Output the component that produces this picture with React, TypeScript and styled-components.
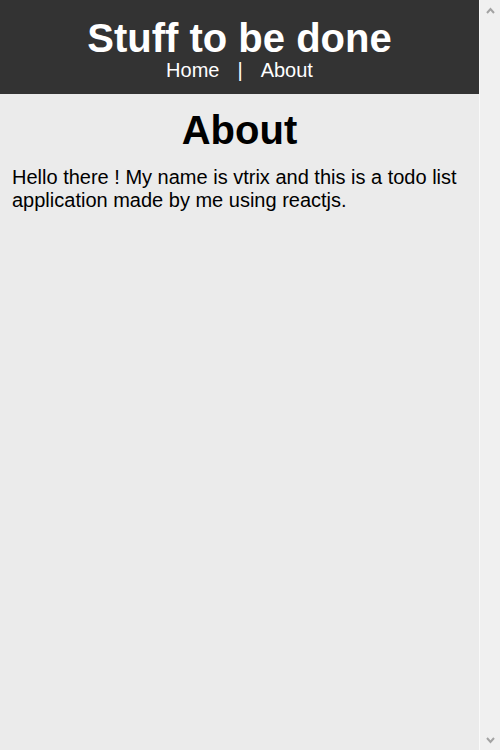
import React from "react";
import styled, { createGlobalStyle } from "styled-components";

const GlobalStyle = createGlobalStyle`
  html, body {
    margin: 0;
    padding: 0;
    background: #ebebeb;
    font-family: "Liberation Sans", Arial, sans-serif;
  }
`;

const Frame = styled.div`
  display: flex;
  height: 100vh;
  overflow: hidden;
`;

const Page = styled.div`
  flex: 1;
  min-width: 0;
  display: flex;
  flex-direction: column;
`;

const ScrollBar = styled.div`
  width: 20px;
  flex: none;
  background: #f0f0f0;
  border-left: 1px solid #fafafa;
  display: flex;
  flex-direction: column;
  justify-content: space-between;
  align-items: center;
  padding: 7px 0 6px;
`;

const Arrow = styled.svg`
  display: block;
  width: 9px;
  height: 7px;
`;

const Header = styled.header`
  background: #333333;
  color: #ffffff;
  padding: 18px 0 12px;
  display: flex;
  flex-direction: column;
  align-items: center;
`;

const Title = styled.h1`
  margin: 0;
  font-size: 40px;
  line-height: 40px;
  font-weight: bold;
`;

const Nav = styled.nav`
  display: flex;
  align-items: center;
  gap: 18px;
  margin-top: 1px;
  font-size: 20px;
  line-height: 23px;
`;

const NavLink = styled.a`
  color: #ffffff;
  text-decoration: none;
`;

const Main = styled.main`
  flex: 1;
  padding: 14px 12px;
  color: #000000;
`;

const Heading = styled.h1`
  margin: 0 0 13px;
  text-align: center;
  font-size: 40px;
  font-weight: bold;
`;

const Para = styled.p`
  margin: 0;
  font-size: 20px;
  line-height: 23px;
`;

export default function App() {
  return (
    <>
      <GlobalStyle />
      <Frame>
        <Page>
          <Header>
            <Title>Stuff to be done</Title>
            <Nav>
              <NavLink href="#">Home</NavLink>
              <span>|</span>
              <NavLink href="#">About</NavLink>
            </Nav>
          </Header>
          <Main>
            <Heading>About</Heading>
            <Para>
              Hello there ! My name is vtrix and this is a todo list application made by me using reactjs.
            </Para>
          </Main>
        </Page>
        <ScrollBar>
          <Arrow viewBox="0 0 9 7">
            <polyline points="1,6 4.5,2 8,6" fill="none" stroke="#a3a3a3" strokeWidth="2" />
          </Arrow>
          <Arrow viewBox="0 0 9 7">
            <polyline points="1,1 4.5,5 8,1" fill="none" stroke="#a3a3a3" strokeWidth="2" />
          </Arrow>
        </ScrollBar>
      </Frame>
    </>
  );
}
